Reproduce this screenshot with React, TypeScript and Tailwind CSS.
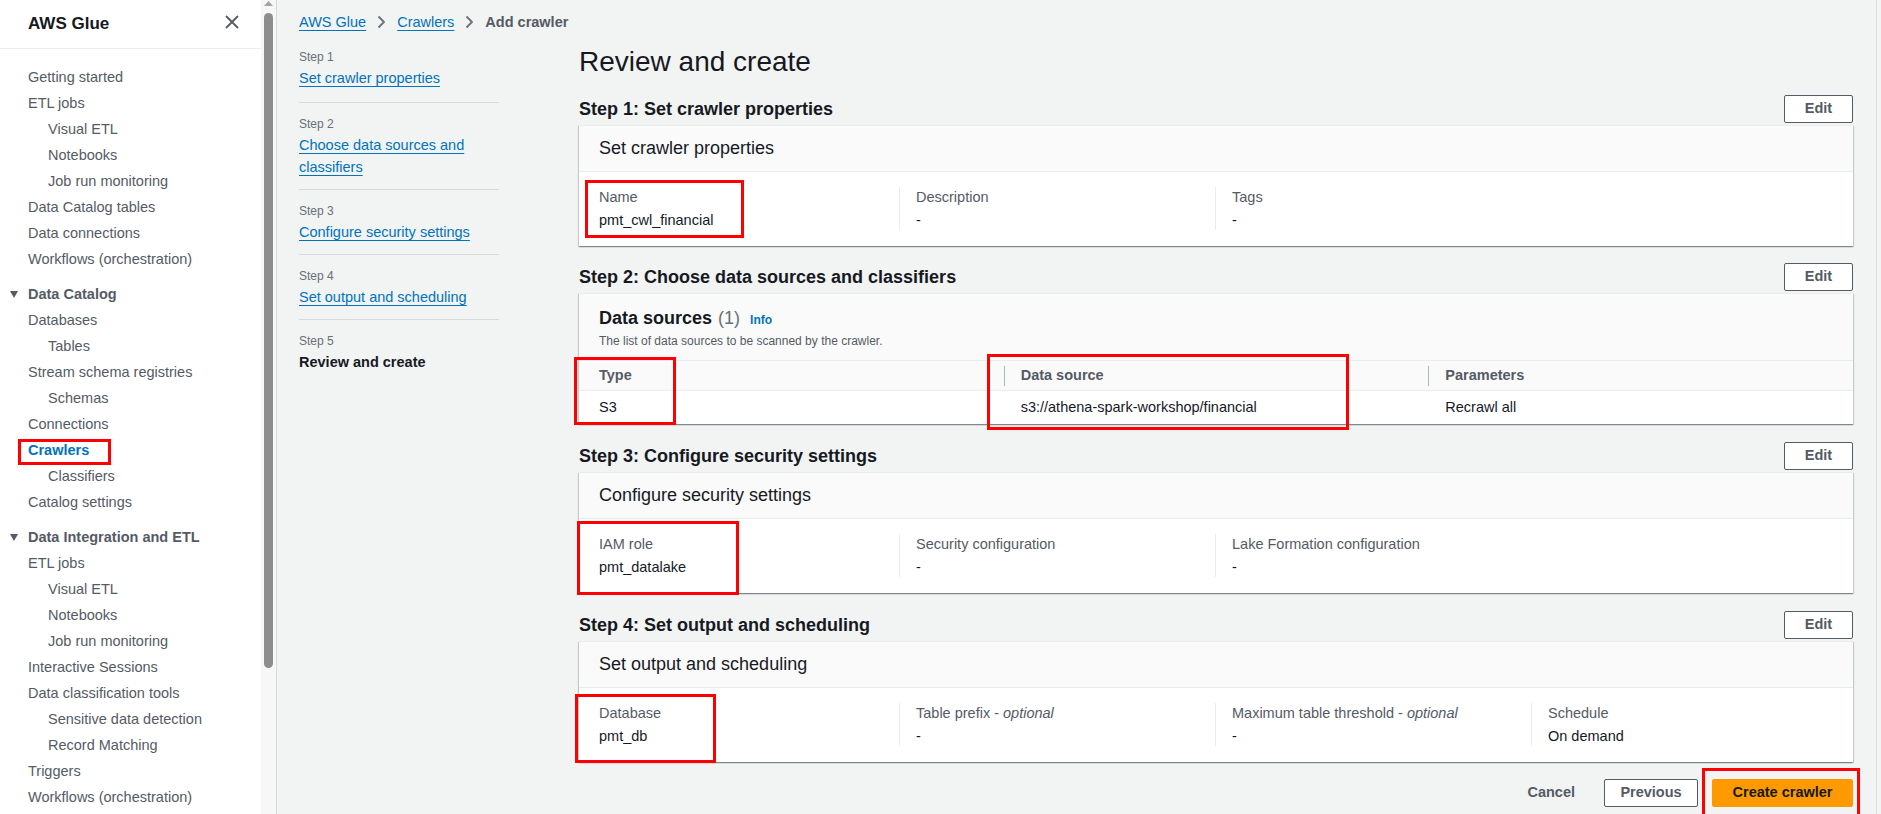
import React from "react";

type NavItem = { label: string; sub?: boolean; active?: boolean };

const generalNav: NavItem[] = [
  { label: "Getting started" },
  { label: "ETL jobs" },
  { label: "Visual ETL", sub: true },
  { label: "Notebooks", sub: true },
  { label: "Job run monitoring", sub: true },
  { label: "Data Catalog tables" },
  { label: "Data connections" },
  { label: "Workflows (orchestration)" },
];

const catalogNav: NavItem[] = [
  { label: "Databases" },
  { label: "Tables", sub: true },
  { label: "Stream schema registries" },
  { label: "Schemas", sub: true },
  { label: "Connections" },
  { label: "Crawlers", active: true },
  { label: "Classifiers", sub: true },
  { label: "Catalog settings" },
];

const integrationNav: NavItem[] = [
  { label: "ETL jobs" },
  { label: "Visual ETL", sub: true },
  { label: "Notebooks", sub: true },
  { label: "Job run monitoring", sub: true },
  { label: "Interactive Sessions" },
  { label: "Data classification tools" },
  { label: "Sensitive data detection", sub: true },
  { label: "Record Matching", sub: true },
  { label: "Triggers" },
  { label: "Workflows (orchestration)" },
];

const steps = [
  { step: "Step 1", title: "Set crawler properties" },
  { step: "Step 2", title: "Choose data sources and classifiers" },
  { step: "Step 3", title: "Configure security settings" },
  { step: "Step 4", title: "Set output and scheduling" },
];

const NavLink = ({ item }: { item: NavItem }) => (
  <div
    className={`relative flex h-[26px] items-center ${item.sub ? "pl-[48px]" : "pl-[28px]"} ${
      item.active ? "font-bold text-[#0073bb]" : "text-[#545b64]"
    }`}
  >
    {item.label}
    {item.active && (
      <span className="absolute left-[18px] top-[1px] h-[26px] w-[93px] border-[3px] border-[#ff0000]" />
    )}
  </div>
);

const SectionHeader = ({ label }: { label: string }) => (
  <div className="mt-[8px] flex h-[27px] items-center gap-[10px] pl-[10px] font-bold text-[#545b64]">
    <svg width="8" height="7" viewBox="0 0 8 7">
      <path d="M0 0 H8 L4 7 Z" fill="#545b64" />
    </svg>
    {label}
  </div>
);

const RedBox = ({ className }: { className: string }) => (
  <span className={`pointer-events-none absolute border-[3px] border-[#ff0000] ${className}`} />
);

const EditButton = () => (
  <button className="h-[28px] w-[69px] rounded-[2px] border border-[#545b64] bg-white font-bold text-[#545b64]">
    Edit
  </button>
);

const SectionRow = ({ title, className = "" }: { title: string; className?: string }) => (
  <div className={`flex h-[28px] items-center justify-between ${className}`}>
    <h2 className="text-[18px] font-bold leading-[22px] text-[#16191f]">{title}</h2>
    <EditButton />
  </div>
);

const cardShadow =
  "shadow-[0_1px_1px_0_rgba(0,28,36,0.3),1px_1px_1px_0_rgba(0,28,36,0.15),-1px_1px_1px_0_rgba(0,28,36,0.15)]";

type Field = { label: React.ReactNode; value: string };

const Card = ({
  title,
  fields,
  children,
}: {
  title: string;
  fields: Field[];
  children?: React.ReactNode;
}) => (
  <div className={`relative mt-[2px] border-t border-[#eaeded] bg-white ${cardShadow}`}>
    <div className="flex h-[46px] items-center border-b border-[#eaeded] bg-[#fafafa] px-5 text-[18px] text-[#16191f]">
      {title}
    </div>
    <div className="grid grid-cols-[316px_316px_316px_316px] pb-[16px] pl-[4px] pt-[15px]">
      {fields.map((f, i) => (
        <div key={i} className={`pl-4 ${i > 0 ? "border-l border-[#eaeded]" : ""}`}>
          <div className="leading-[20px] text-[#545b64]">{f.label}</div>
          <div className="mt-[3px] leading-[20px] text-[#16191f]">{f.value}</div>
        </div>
      ))}
    </div>
    {children}
  </div>
);

const App = () => {
  return (
    <div className="flex h-[814px] w-[1881px] overflow-hidden bg-[#f2f3f3] font-['Liberation_Sans',Arial,sans-serif] text-[14.5px]">
      {/* Side navigation */}
      <aside className="flex w-[261px] shrink-0 flex-col bg-white">
        <div className="relative flex h-[49px] items-center border-b border-[#eaeded] pl-[28px]">
          <span className="text-[17px] font-bold text-[#16191f]">AWS Glue</span>
          <svg
            className="absolute left-[225px] top-[15px]"
            width="14"
            height="14"
            viewBox="0 0 14 14"
          >
            <path d="M1 1 L13 13 M13 1 L1 13" stroke="#545b64" strokeWidth="1.8" />
          </svg>
        </div>
        <nav className="pt-[16px]">
          {generalNav.map((item, i) => (
            <NavLink key={`g${i}`} item={item} />
          ))}
          <SectionHeader label="Data Catalog" />
          {catalogNav.map((item, i) => (
            <NavLink key={`c${i}`} item={item} />
          ))}
          <SectionHeader label="Data Integration and ETL" />
          {integrationNav.map((item, i) => (
            <NavLink key={`d${i}`} item={item} />
          ))}
        </nav>
      </aside>

      {/* Sidebar scrollbar */}
      <div className="flex w-[16px] shrink-0 flex-col items-center border-r border-[#d5dbdb] bg-[#f7f7f7] pt-[1px]">
        <svg width="9" height="5" viewBox="0 0 9 5">
          <path d="M0 5 L4.5 0 L9 5 Z" fill="#a3a3a3" />
        </svg>
        <div className="mt-[7px] h-[655px] w-[9px] rounded-full bg-[#8d8d8d]" />
      </div>

      {/* Main */}
      <main className="flex min-w-0 flex-1 flex-col pl-[22px] pr-[23px] text-[#16191f]">
        <div className="flex items-center pt-[12px] leading-[20px]">
          <a className="text-[#0073bb] underline underline-offset-[3px]">AWS Glue</a>
          <svg className="mx-[11px]" width="9" height="14" viewBox="0 0 9 14">
            <path d="M1.5 1.5 L7 7 L1.5 12.5" fill="none" stroke="#687078" strokeWidth="1.8" />
          </svg>
          <a className="text-[#0073bb] underline underline-offset-[3px]">Crawlers</a>
          <svg className="mx-[11px]" width="9" height="14" viewBox="0 0 9 14">
            <path d="M1.5 1.5 L7 7 L1.5 12.5" fill="none" stroke="#687078" strokeWidth="1.8" />
          </svg>
          <span className="font-bold text-[#545b64]">Add crawler</span>
        </div>

        <div className="flex gap-[80px]">
          {/* Wizard steps */}
          <div className="w-[200px] shrink-0 pt-[17px]">
            {steps.map((s, i) => (
              <div
                key={i}
                className={`border-b border-[#d5dbdb] ${i > 0 ? "pb-[11px] pt-[13px]" : "pb-[13px]"}`}
              >
                <div className="text-[12px] leading-[16px] text-[#687078]">{s.step}</div>
                <a className="mt-[2px] block leading-[22px] text-[#0073bb]">
                  <span className="underline underline-offset-[3px]">{s.title}</span>
                </a>
              </div>
            ))}
            <div className="pt-[13px]">
              <div className="text-[12px] leading-[16px] text-[#687078]">Step 5</div>
              <div className="mt-[2px] font-bold leading-[22px] text-[#16191f]">Review and create</div>
            </div>
          </div>

          {/* Review content */}
          <div className="min-w-0 flex-1 pt-[12px]">
            <h1 className="text-[28px] leading-[36px] text-[#16191f]">Review and create</h1>

            <SectionRow title="Step 1: Set crawler properties" className="mt-[15px]" />
            <Card
              title="Set crawler properties"
              fields={[
                { label: "Name", value: "pmt_cwl_financial" },
                { label: "Description", value: "-" },
                { label: "Tags", value: "-" },
              ]}
            >
              <RedBox className="left-[6px] top-[54px] h-[58px] w-[159px]" />
            </Card>

            <SectionRow title="Step 2: Choose data sources and classifiers" className="mt-[17px]" />
            <div className={`relative mt-[2px] border-t border-[#eaeded] bg-white ${cardShadow}`}>
              <div className="bg-[#fafafa] px-5 pb-[11px] pt-[13px]">
                <div className="flex items-baseline leading-[22px]">
                  <span className="text-[18px] font-bold text-[#16191f]">Data sources</span>
                  <span className="ml-[6px] text-[18px] text-[#687078]">(1)</span>
                  <span className="ml-[10px] text-[12px] font-bold text-[#0073bb]">Info</span>
                </div>
                <div className="mt-[2px] text-[12px] leading-[16px] text-[#545b64]">
                  The list of data sources to be scanned by the crawler.
                </div>
              </div>
              <div className="grid h-[31px] grid-cols-3 items-center border-y border-[#eaeded] bg-[#fafafa] font-bold text-[#545b64]">
                <div className="pl-5">Type</div>
                <div className="flex items-center">
                  <span className="mr-[16px] h-[20px] border-l border-[#aab7b8]" />
                  Data source
                </div>
                <div className="flex items-center">
                  <span className="mr-[16px] h-[20px] border-l border-[#aab7b8]" />
                  Parameters
                </div>
              </div>
              <div className="grid h-[33px] grid-cols-3 items-center text-[#16191f]">
                <div className="pl-5">S3</div>
                <div className="pl-[17px]">s3://athena-spark-workshop/financial</div>
                <div className="pl-[17px]">Recrawl all</div>
              </div>
              <RedBox className="-left-[5px] top-[63px] h-[68px] w-[102px]" />
              <RedBox className="left-[408px] top-[60px] h-[76px] w-[362px]" />
            </div>

            <SectionRow title="Step 3: Configure security settings" className="mt-[18px]" />
            <Card
              title="Configure security settings"
              fields={[
                { label: "IAM role", value: "pmt_datalake" },
                { label: "Security configuration", value: "-" },
                { label: "Lake Formation configuration", value: "-" },
              ]}
            >
              <RedBox className="-left-[2px] top-[48px] h-[74px] w-[162px]" />
            </Card>

            <SectionRow title="Step 4: Set output and scheduling" className="mt-[18px]" />
            <Card
              title="Set output and scheduling"
              fields={[
                { label: "Database", value: "pmt_db" },
                {
                  label: (
                    <>
                      Table prefix - <i>optional</i>
                    </>
                  ),
                  value: "-",
                },
                {
                  label: (
                    <>
                      Maximum table threshold - <i>optional</i>
                    </>
                  ),
                  value: "-",
                },
                { label: "Schedule", value: "On demand" },
              ]}
            >
              <RedBox className="-left-[4px] top-[52px] h-[69px] w-[141px]" />
            </Card>

            <div className="mt-[17px] flex items-center justify-end">
              <button className="mr-[9px] h-[28px] px-5 font-bold text-[#545b64]">Cancel</button>
              <button className="h-[28px] w-[94px] rounded-[2px] border border-[#545b64] bg-white font-bold text-[#545b64]">
                Previous
              </button>
              <div className="relative ml-[14px]">
                <button className="h-[28px] w-[141px] rounded-[2px] border border-[#ff9900] bg-[#ff9900] font-bold text-[#16191f]">
                  Create crawler
                </button>
                <RedBox className="-left-[10px] -top-[11px] h-[49px] w-[158px]" />
              </div>
            </div>
          </div>
        </div>
      </main>

      {/* Page edge */}
      <div className="w-[5px] shrink-0 border-l border-[#dcdfdf]" />
    </div>
  );
};

export default App;
